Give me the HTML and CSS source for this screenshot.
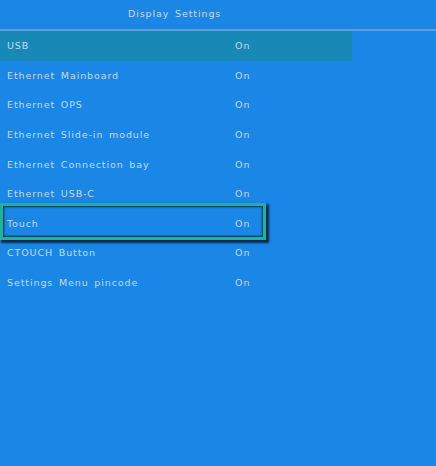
FILE: index.html
```html
<!DOCTYPE html>
<html>
<head>
<meta charset="utf-8">
<link rel="stylesheet" href="styles.css">
</head>
<body>
<div class="screen">
  <div class="title">Display Settings</div>
  <div class="sep"></div>
  <ul class="list">
    <li class="row selected"><span class="label">USB</span><span class="value">On</span></li>
    <li class="row"><span class="label">Ethernet Mainboard</span><span class="value">On</span></li>
    <li class="row"><span class="label">Ethernet OPS</span><span class="value">On</span></li>
    <li class="row"><span class="label">Ethernet Slide-in module</span><span class="value">On</span></li>
    <li class="row"><span class="label">Ethernet Connection bay</span><span class="value">On</span></li>
    <li class="row"><span class="label">Ethernet USB-C</span><span class="value">On</span></li>
    <li class="row focused"><span class="label">Touch</span><span class="value">On</span></li>
    <li class="row"><span class="label">CTOUCH Button</span><span class="value">On</span></li>
    <li class="row"><span class="label">Settings Menu pincode</span><span class="value">On</span></li>
  </ul>
</div>
</body>
</html>
```
FILE: styles.css
```css
html, body {
  margin: 0;
  padding: 0;
  background: #1a87e7;
}
.screen {
  width: 436px;
  height: 466px;
  background: #1a87e7;
  color: #c6d8ef;
  font-family: "DejaVu Sans", Verdana, sans-serif;
  font-size: 9.5px;
  letter-spacing: 0.9px;
  word-spacing: 1.8px;
}
.title {
  height: 29px;
  width: 352px;
  box-sizing: border-box;
  padding-left: 128px;
  line-height: 27px;
}
.sep {
  height: 2px;
  background: #5e9fe0;
}
.list {
  list-style: none;
  margin: 0;
  padding: 0;
  width: 352px;
}
.row {
  position: relative;
  display: flex;
  align-items: center;
  height: 29.6px;
}
.row.selected {
  background: #1889b6;
}
.label {
  width: 235px;
  padding-left: 7px;
  box-sizing: border-box;
}
.value {
  flex: 1;
}
.row.focused::after {
  content: "";
  position: absolute;
  left: 0;
  top: -6px;
  width: 266px;
  height: 37px;
  box-sizing: border-box;
  border: 3px solid #17b79d;
  box-shadow: inset 0 0 2px 1px #0b2a4a, 2px 2px 2px 1px #0b2a4a;
}
```
